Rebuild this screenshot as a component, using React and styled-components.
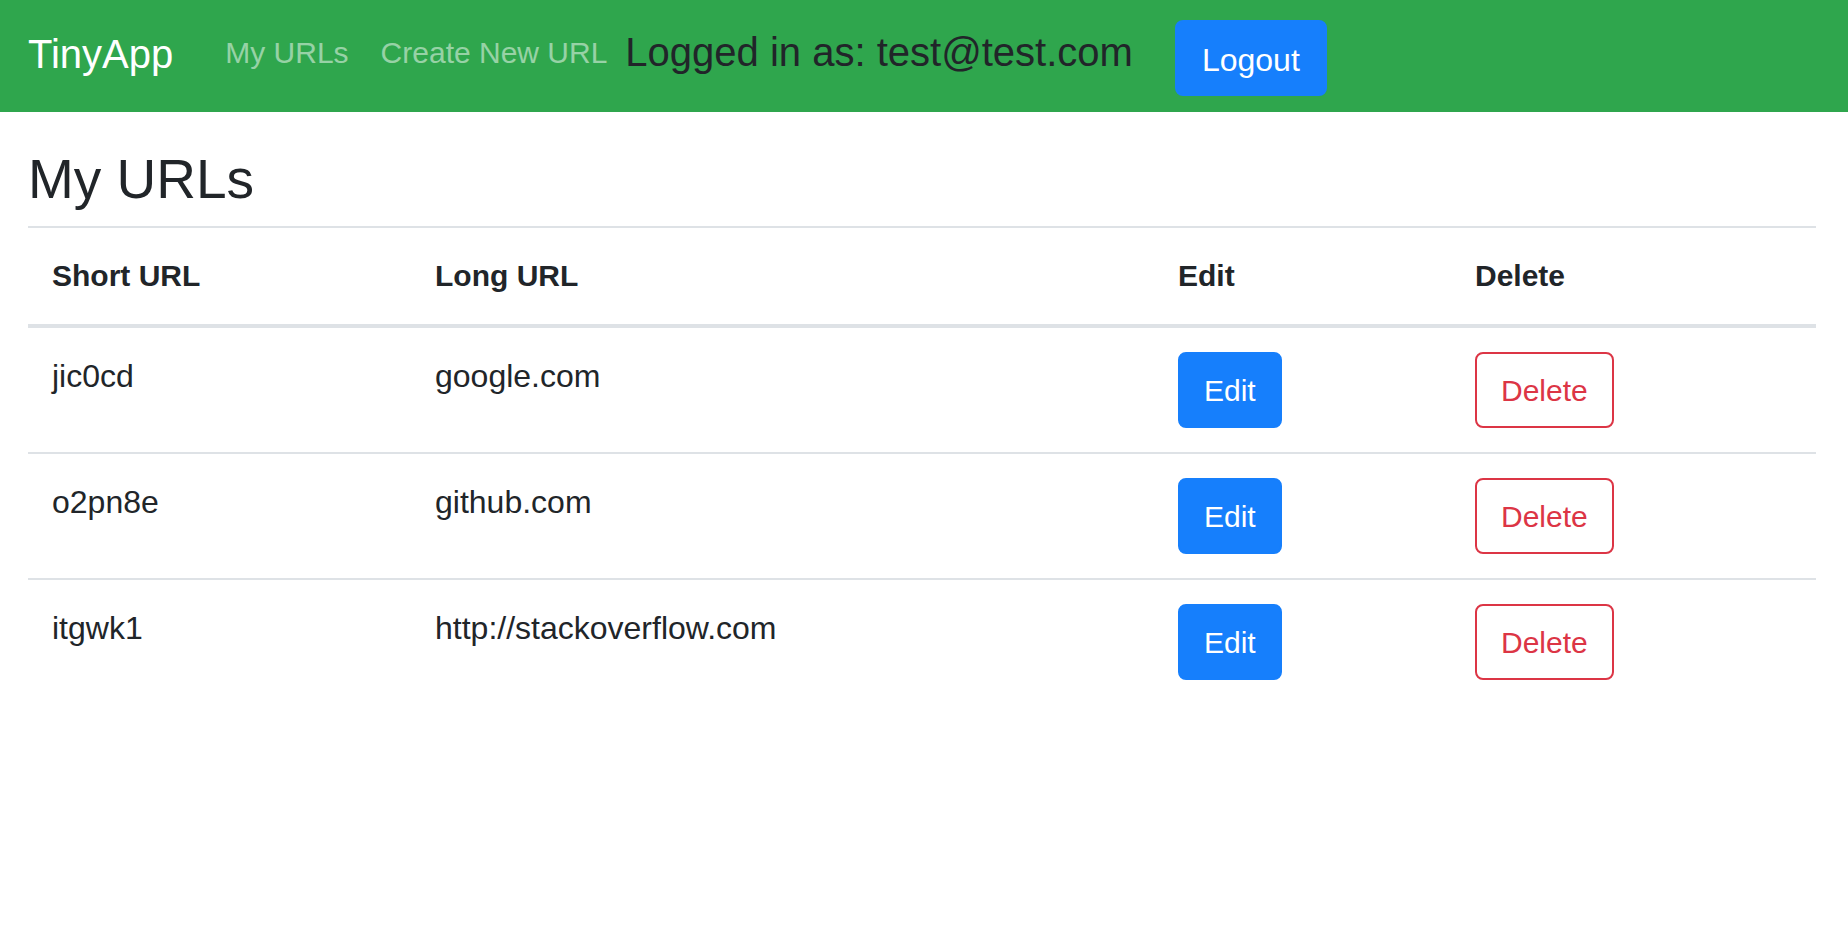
import React from "react";
import styled, { createGlobalStyle } from "styled-components";

const GlobalStyle = createGlobalStyle`
  html, body {
    margin: 0;
    padding: 0;
    background: #ffffff;
  }
  body {
    font-family: "Liberation Sans", Arial, sans-serif;
    color: #212529;
    -webkit-font-smoothing: antialiased;
  }
  * { box-sizing: border-box; }
`;

const NavBar = styled.nav`
  display: flex;
  align-items: center;
  height: 112px;
  padding: 0 28px;
  background: #2fa64d;
`;

const Brand = styled.a`
  font-size: 40px;
  line-height: 60px;
  color: #ffffff;
  text-decoration: none;
  margin: 0 36px 4px 0;
  white-space: nowrap;
`;

const NavList = styled.ul`
  display: flex;
  list-style: none;
  margin: 0 0 7px 0;
  padding: 0;
`;

const NavLink = styled.a`
  display: block;
  font-size: 30px;
  line-height: 45px;
  padding: 0 16px;
  color: rgba(255, 255, 255, 0.5);
  text-decoration: none;
  white-space: nowrap;
`;

const LoggedIn = styled.h5`
  font-size: 40px;
  font-weight: 400;
  line-height: 48px;
  margin: 0 0 8px 2px;
  color: #212529;
  white-space: nowrap;
`;

const Button = styled.button`
  font-family: inherit;
  font-size: ${(p) => p.$size || 30}px;
  line-height: 48px;
  padding: 13px 24px 11px;
  border-radius: 8px;
  border: 2px solid ${(p) => (p.$variant === "danger" ? "#dc3545" : "#167ffc")};
  background: ${(p) => (p.$variant === "danger" ? "#ffffff" : "#167ffc")};
  color: ${(p) => (p.$variant === "danger" ? "#dc3545" : "#ffffff")};
  cursor: pointer;
  white-space: nowrap;
`;

const LogoutButton = styled(Button)`
  margin: 3px 0 0 42px;
  padding: 14px 25px 10px;
`;

const Main = styled.main`
  padding: 0 32px 0 28px;
`;

const Heading = styled.h1`
  font-size: 55px;
  font-weight: 500;
  line-height: 66px;
  margin: 34px 0 14px 0;
  color: #212529;
`;

const Table = styled.table`
  width: 1788px;
  border-collapse: collapse;
  table-layout: fixed;
  line-height: 48px;
  color: #212529;
`;

const Col = styled.col`
  width: ${(p) => p.$w}px;
`;

const HeadCell = styled.th`
  text-align: left;
  font-size: 30px;
  font-weight: 700;
  padding: 24px;
  vertical-align: bottom;
  border-top: 2px solid #dee2e6;
  border-bottom: 4px solid #dee2e6;
`;

const Cell = styled.td`
  font-size: 32px;
  padding: 24px;
  vertical-align: top;
  border-top: 2px solid #dee2e6;
`;

const urls = [
  { short: "jic0cd", long: "google.com" },
  { short: "o2pn8e", long: "github.com" },
  { short: "itgwk1", long: "http://stackoverflow.com" },
];

export default function App() {
  return (
    <>
      <GlobalStyle />
      <NavBar>
        <Brand href="#">TinyApp</Brand>
        <NavList>
          <li>
            <NavLink href="#">My URLs</NavLink>
          </li>
          <li>
            <NavLink href="#">Create New URL</NavLink>
          </li>
        </NavList>
        <LoggedIn>Logged in as: test@test.com</LoggedIn>
        <LogoutButton $size={32}>Logout</LogoutButton>
      </NavBar>
      <Main>
        <Heading>My URLs</Heading>
        <Table>
          <colgroup>
            <Col $w={383} />
            <Col $w={743} />
            <Col $w={297} />
            <Col $w={365} />
          </colgroup>
          <thead>
            <tr>
              <HeadCell>Short URL</HeadCell>
              <HeadCell>Long URL</HeadCell>
              <HeadCell>Edit</HeadCell>
              <HeadCell>Delete</HeadCell>
            </tr>
          </thead>
          <tbody>
            {urls.map((u) => (
              <tr key={u.short}>
                <Cell>{u.short}</Cell>
                <Cell>{u.long}</Cell>
                <Cell>
                  <Button>Edit</Button>
                </Cell>
                <Cell>
                  <Button $variant="danger">Delete</Button>
                </Cell>
              </tr>
            ))}
          </tbody>
        </Table>
      </Main>
    </>
  );
}
